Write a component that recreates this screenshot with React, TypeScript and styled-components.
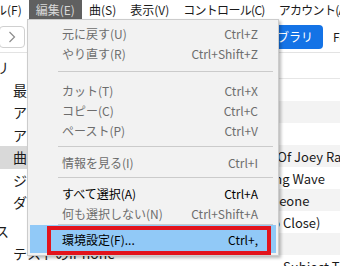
import styled, { createGlobalStyle } from "styled-components";

const GlobalStyle = createGlobalStyle`
  html, body {
    margin: 0;
    padding: 0;
    background: #fff;
    overflow: hidden;
  }
  body {
    font-family: "Noto Sans CJK JP", "Noto Sans", sans-serif;
  }
`;

const Window = styled.div`
  position: relative;
  width: 340px;
  height: 266px;
  overflow: hidden;
  background: #fff;
`;

// the app window is scrolled a bit to the left, so its left edge is cut off
const AppShell = styled.div`
  width: 404px;
  height: 266px;
  margin-left: -64px;
  display: flex;
  flex-direction: column;
`;

const MenuBar = styled.div`
  display: flex;
  height: 19px;
  padding-left: 16px;
  font-size: 12px;
  background: #fff;
`;

const MenuTitle = styled.div<{ $active?: boolean; $tight?: boolean }>`
  display: flex;
  align-items: center;
  flex-shrink: 0;
  padding: 0 7px;
  white-space: nowrap;
  letter-spacing: ${(p) => (p.$tight ? "-0.7px" : "0")};
  color: ${(p) => (p.$active ? "#d8d8d8" : "#1a1a1a")};
  background: ${(p) => (p.$active ? "#606060" : "transparent")};
`;

const Toolbar = styled.div`
  display: flex;
  align-items: center;
  height: 34px;
  box-sizing: border-box;
  padding: 2px 0 0 33px;
  border-bottom: 1px solid #e3e3e3;
`;

const NavButton = styled.div`
  width: 26px;
  height: 22px;
  flex-shrink: 0;
  box-sizing: border-box;
  border: 1px solid #d0d0d0;
  border-radius: 4px;
  display: flex;
  align-items: center;
  justify-content: center;

  & + & {
    margin-left: 4px;
  }
`;

const Tabs = styled.div`
  display: flex;
  flex-shrink: 0;
  margin-left: 218px;
`;

const Tab = styled.div<{ $active?: boolean }>`
  height: 24px;
  flex-shrink: 0;
  padding: 0 10px;
  border-radius: 4px;
  display: flex;
  align-items: center;
  font-size: 12px;
  white-space: nowrap;
  color: ${(p) => (p.$active ? "#fff" : "#1a1a1a")};
  background: ${(p) => (p.$active ? "#1473e6" : "transparent")};
`;

const Body = styled.div`
  display: flex;
  flex: 1;
  min-height: 0;
`;

const Sidebar = styled.div`
  width: 214px;
  flex-shrink: 0;
  padding-top: 3px;
  font-size: 14px;
  color: #1b1b1b;
`;

const SideHeader = styled.div<{ $gap?: number }>`
  width: 73px;
  height: 22.5px;
  margin-top: ${(p) => p.$gap ?? 0}px;
  display: flex;
  align-items: center;
  justify-content: flex-end;
  white-space: nowrap;
`;

const SideItem = styled.div<{ $selected?: boolean }>`
  height: 22.5px;
  padding-left: 77px;
  display: flex;
  align-items: center;
  white-space: nowrap;
  overflow: hidden;
  background: ${(p) => (p.$selected ? "#d9d9d9" : "transparent")};
`;

const List = styled.div`
  flex: 1;
  min-width: 0;
  font-size: 13px;
  color: #1a1a1a;
`;

const ListHeader = styled.div`
  height: 26px;
  box-sizing: border-box;
  border-bottom: 1px solid #e6e6e6;
`;

const Row = styled.div<{ $striped?: boolean }>`
  height: 22px;
  padding-left: 60px;
  display: flex;
  align-items: center;
  white-space: nowrap;
  background: ${(p) => (p.$striped ? "#f3f3f3" : "transparent")};
`;

const Cell = styled.span<{ $offset?: number }>`
  margin-left: ${(p) => p.$offset ?? 0}px;
`;

const Dropdown = styled.div`
  position: absolute;
  left: 27px;
  top: 19px;
  width: 252px;
  box-sizing: border-box;
  padding: 3px 2px 2px;
  background: #f2f2f2;
  border: 1px solid #cccccc;
  box-shadow: 2px 2px 3px rgba(0, 0, 0, 0.28);
  font-size: 12px;
`;

const MenuItem = styled.div<{ $disabled?: boolean; $highlight?: boolean; $h?: number }>`
  height: ${(p) => p.$h ?? 20}px;
  padding: 0 18px 0 32px;
  display: flex;
  align-items: center;
  justify-content: space-between;
  white-space: nowrap;
  color: ${(p) => (p.$disabled ? "#6d6d6d" : "#000")};
  background: ${(p) => (p.$highlight ? "#91c9f7" : "transparent")};
`;

const Separator = styled.div<{ $h: number }>`
  height: ${(p) => p.$h}px;
  padding: 0 3px 0 28px;
  display: flex;
  align-items: center;

  &::after {
    content: "";
    flex: 1;
    height: 1px;
    background: #cbcbcb;
  }
`;

const Callout = styled.div`
  position: absolute;
  left: 47px;
  top: 226px;
  width: 224px;
  height: 29px;
  box-sizing: border-box;
  border: 4px solid #e2131c;
`;

type Entry =
  | { sep: number }
  | { label: string; key: string; disabled?: boolean; highlight?: boolean; h?: number };

const editMenu: Entry[] = [
  { label: "元に戻す(U)", key: "Ctrl+Z", disabled: true },
  { label: "やり直す(R)", key: "Ctrl+Shift+Z", disabled: true },
  { sep: 17 },
  { label: "カット(T)", key: "Ctrl+X", disabled: true },
  { label: "コピー(C)", key: "Ctrl+C", disabled: true },
  { label: "ペースト(P)", key: "Ctrl+V", disabled: true },
  { sep: 12 },
  { label: "情報を見る(I)", key: "Ctrl+I", disabled: true },
  { sep: 11 },
  { label: "すべて選択(A)", key: "Ctrl+A" },
  { label: "何も選択しない(N)", key: "Ctrl+Shift+A", disabled: true },
  { sep: 2 },
  { label: "環境設定(F)...", key: "Ctrl+,", highlight: true, h: 28 },
];

const songs: { title: string; offset?: number }[] = [
  { title: "Higher" },
  { title: "Run" },
  { title: "Tonight" },
  { title: "The Ballad Of Joey Ramone" },
  { title: "The Breaking Wave" },
  { title: "I Need Someone" },
  { title: "Near Us (So Close)" },
  { title: "Home" },
  { title: "Subject To Waiting", offset: 73 },
];

const Chevron = ({ left }: { left?: boolean }) => (
  <svg width="8" height="12" viewBox="0 0 8 12">
    <polyline
      points={left ? "6.5,1 1.5,6 6.5,11" : "1.5,1 6.5,6 1.5,11"}
      fill="none"
      stroke="#8c8c8c"
      strokeWidth="1.2"
    />
  </svg>
);

export default function App() {
  return (
    <Window>
      <GlobalStyle />
      <AppShell>
        <MenuBar>
          <MenuTitle>ファイル(F)</MenuTitle>
          <MenuTitle $active>編集(E)</MenuTitle>
          <MenuTitle>曲(S)</MenuTitle>
          <MenuTitle>表示(V)</MenuTitle>
          <MenuTitle $tight>コントロール(C)</MenuTitle>
          <MenuTitle $tight>アカウント(A)</MenuTitle>
        </MenuBar>
        <Toolbar>
          <NavButton>
            <Chevron left />
          </NavButton>
          <NavButton>
            <Chevron />
          </NavButton>
          <Tabs>
            <Tab $active>ライブラリ</Tab>
            <Tab>For You</Tab>
          </Tabs>
        </Toolbar>
        <Body>
          <Sidebar>
            <SideHeader>ライブラリ</SideHeader>
            <SideItem>最近追加した項目</SideItem>
            <SideItem>アーティスト</SideItem>
            <SideItem>アルバム</SideItem>
            <SideItem $selected>曲</SideItem>
            <SideItem>ジャンル</SideItem>
            <SideItem>ダウンロード済み</SideItem>
            <SideHeader $gap={6}>デバイス</SideHeader>
            <SideItem>テストのiPhone</SideItem>
          </Sidebar>
          <List>
            <ListHeader />
            {songs.map((s, i) => (
              <Row key={s.title} $striped={i % 2 === 1}>
                <Cell $offset={s.offset}>{s.title}</Cell>
              </Row>
            ))}
          </List>
        </Body>
      </AppShell>

      <Dropdown>
        {editMenu.map((e, i) =>
          "sep" in e ? (
            <Separator key={i} $h={e.sep} />
          ) : (
            <MenuItem key={i} $disabled={e.disabled} $highlight={e.highlight} $h={e.h}>
              <span>{e.label}</span>
              <span>{e.key}</span>
            </MenuItem>
          )
        )}
      </Dropdown>
      <Callout />
    </Window>
  );
}
